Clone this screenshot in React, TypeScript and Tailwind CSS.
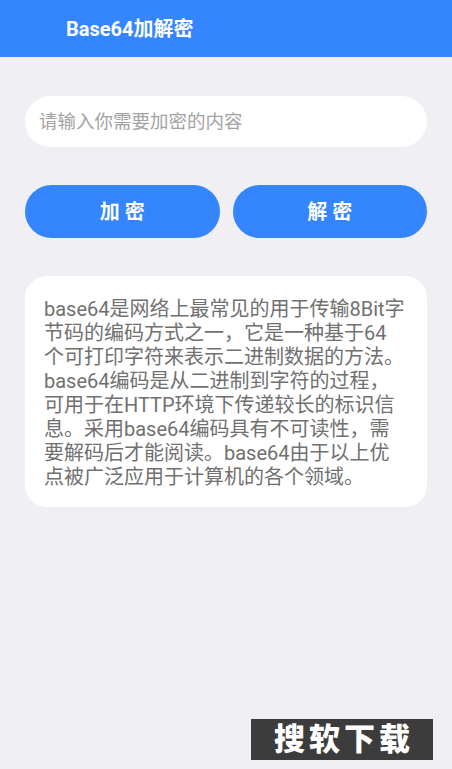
import React, { useState } from 'react';

const lines = [
  'base64是网络上最常见的用于传输8Bit字',
  '节码的编码方式之一，它是一种基于64',
  '个可打印字符来表示二进制数据的方法。',
  'base64编码是从二进制到字符的过程，',
  '可用于在HTTP环境下传递较长的标识信',
  '息。采用base64编码具有不可读性，需',
  '要解码后才能阅读。base64由于以上优',
  '点被广泛应用于计算机的各个领域。',
];

export default function App() {
  const [value, setValue] = useState('');

  return (
    <div
      className="relative min-h-screen bg-[#efeff4]"
      style={{ fontFamily: "Roboto, 'Noto Sans CJK SC', sans-serif" }}
    >
      <header className="h-[57px] bg-[#3585fe] flex items-center pl-[66px]">
        <h1 className="text-white text-[20px] font-bold">Base64加解密</h1>
      </header>

      <div className="px-[25px] pt-[39px]">
        <input
          value={value}
          onChange={(e) => setValue(e.target.value)}
          placeholder="请输入你需要加密的内容"
          className="w-full h-[51px] rounded-full bg-white px-[14px] text-[18.5px] text-[#333] placeholder:text-[#a3a3a3] outline-none"
        />

        <div className="flex gap-[13px] mt-[38px]">
          <button className="flex-1 h-[53px] rounded-full bg-[#3585fe] text-white text-[20px] font-bold">
            加 密
          </button>
          <button className="flex-1 h-[53px] rounded-full bg-[#3585fe] text-white text-[20px] font-bold">
            解 密
          </button>
        </div>

        <div className="mt-[38px] bg-white rounded-[22px] pl-[19px] pr-2 pt-[21px] pb-[18px] text-[#707070] text-[20px] leading-[24px]">
          {lines.map((l, i) => (
            <div key={i} className="whitespace-nowrap">{l}</div>
          ))}
        </div>
      </div>

      <div className="absolute left-[251px] top-[719px] w-[182px] h-[41px] bg-[#3c3c3c] flex items-center justify-center">
        <span className="text-white text-[31px] font-black tracking-[4px] leading-none pl-[4px]">搜软下载</span>
      </div>
    </div>
  );
}
